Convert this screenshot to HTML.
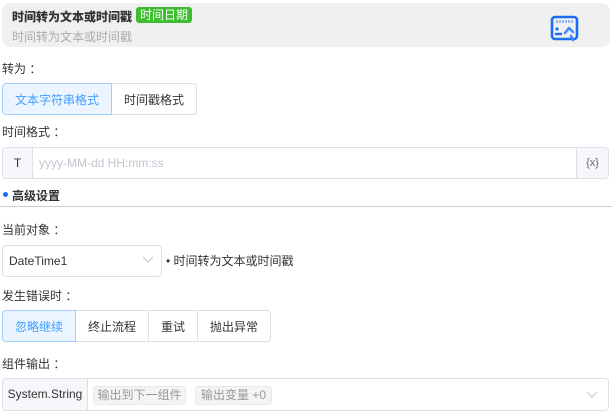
<!DOCTYPE html><html><head><meta charset="utf-8"><style>
*{box-sizing:border-box;margin:0;padding:0}
body{width:612px;height:413px;background:#fff;font-family:"Liberation Sans","Noto Sans CJK SC",sans-serif;font-size:12px;color:#333;position:relative;overflow:hidden}
.a{position:absolute}
.lbl{position:absolute;left:2px;font-size:12px;color:#333}
.btn{position:absolute;height:32px;border:1px solid #dcdfe6;display:flex;align-items:center;justify-content:center;font-size:12px;color:#333;background:#fff}
.sel{background:#ecf5ff;color:#409eff;border-color:#a0cfff;z-index:2}
</style></head><body>
<div class="a" style="left:2px;top:3px;width:608px;height:44px;background:#f0f0f0;border-radius:8px"></div>
<div class="a" style="left:12px;top:8px;font-weight:900;font-size:12px;color:#333">时间转为文本或时间戳</div>
<div class="a" style="left:136px;top:7px;width:56px;height:16px;background:#3dbd2f;color:#fff;border-radius:3px;font-size:12px;line-height:16px;text-align:center">时间日期</div>
<div class="a" style="left:12px;top:28px;color:#aaa;font-size:12px">时间转为文本或时间戳</div>
<svg class="a" style="left:550px;top:15px" width="30" height="28" viewBox="0 0 30 28"><rect x="2" y="2" width="25" height="22" rx="3" fill="none" stroke="#1a6ef5" stroke-width="2.6"/><path d="M6 6.5h17" stroke="#7fb0ff" stroke-width="2.4" stroke-dasharray="2 1"/><circle cx="7" cy="14" r="1.6" fill="#1a6ef5"/><path d="M5 19h7" stroke="#1a6ef5" stroke-width="2.4"/><path d="M15 18l4-5M19 13l4 4M21 21l2 4" stroke="#3d8bff" stroke-width="2.6" fill="none" stroke-linecap="round"/></svg>
<div class="lbl" style="top:60px">转为 ：</div>
<div class="btn sel" style="left:2px;top:83px;width:110px;border-radius:4px 0 0 4px">文本字符串格式</div>
<div class="btn" style="left:111px;top:83px;width:86px;border-radius:0 4px 4px 0">时间戳格式</div>
<div class="lbl" style="top:123px">时间格式 ：</div>
<div class="a" style="left:2px;top:147px;width:607px;height:32px;border:1px solid #dcdfe6;border-radius:4px;overflow:hidden">
<div class="a" style="left:0;top:0;width:30px;height:30px;background:#f5f7fa;border-right:1px solid #dcdfe6;text-align:center;line-height:30px">T</div>
<div class="a" style="left:36px;top:0;line-height:30px;color:#c0c4cc">yyyy-MM-dd HH:mm:ss</div>
<div class="a" style="right:0;top:0;width:32px;height:30px;background:#f5f7fa;border-left:1px solid #dcdfe6;text-align:center;line-height:30px;font-size:11px;color:#666">{x}</div>
</div>
<div class="a" style="left:3px;top:192px;width:5px;height:5px;border-radius:50%;background:#1a6ef5"></div>
<div class="a" style="left:12px;top:187px;font-weight:bold;font-size:12px">高级设置</div>
<div class="a" style="left:0;top:206px;width:612px;height:1px;background:#ccc"></div>
<div class="lbl" style="top:221px">当前对象 ：</div>
<div class="a" style="left:2px;top:245px;width:160px;height:32px;border:1px solid #dcdfe6;border-radius:4px;line-height:30px;padding-left:6px">DateTime1</div>
<svg class="a" style="left:143px;top:257px" width="10" height="6"><path d="M0 0l5 5 5-5" fill="none" stroke="#c0c4cc"/></svg>
<div class="a" style="left:166px;top:252px">• 时间转为文本或时间戳</div>
<div class="lbl" style="top:287px">发生错误时 ：</div>
<div class="btn sel" style="left:2px;top:310px;width:74px;border-radius:4px 0 0 4px">忽略继续</div>
<div class="btn" style="left:75px;top:310px;width:74px">终止流程</div>
<div class="btn" style="left:148px;top:310px;width:50px">重试</div>
<div class="btn" style="left:197px;top:310px;width:74px;border-radius:0 4px 4px 0">抛出异常</div>
<div class="lbl" style="top:355px">组件输出 ：</div>
<div class="a" style="left:2px;top:378px;width:607px;height:33px;border:1px solid #dcdfe6;border-radius:4px;overflow:hidden">
<div class="a" style="left:0;top:0;width:85px;height:31px;background:#f5f7fa;border-right:1px solid #dcdfe6;line-height:31px;text-align:center">System.String</div>
<div class="a" style="left:90px;top:7px;width:93px;height:19px;background:#f4f4f5;border:1px solid #e9e9eb;border-radius:3px;color:#999;line-height:17px;text-align:center">输出到下一组件</div>
<div class="a" style="left:192px;top:7px;width:77px;height:19px;background:#f4f4f5;border:1px solid #e9e9eb;border-radius:3px;color:#999;line-height:17px;text-align:center">输出变量 +0</div>
</div>
<svg class="a" style="left:587px;top:392px" width="10" height="6"><path d="M0 0l5 5 5-5" fill="none" stroke="#c0c4cc"/></svg>
</body></html>
